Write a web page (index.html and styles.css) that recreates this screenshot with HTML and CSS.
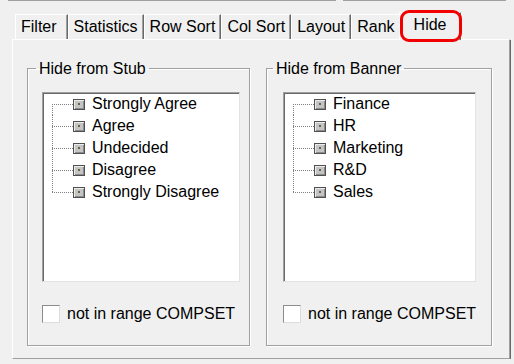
FILE: index.html
```html
<!DOCTYPE html>
<html lang="en">
<head>
    <meta charset="UTF-8">
    <title>Hide</title>
    <link rel="stylesheet" href="styles.css">
</head>
<body>
    <!-- edge of the controls above -->
    <div class="top-strip">
        <span class="strip-left"></span>
        <span class="strip-right"></span>
    </div>

    <div class="dialog">
        <!-- Tabs -->
        <div class="tabs">
            <div class="tab tab-first">Filter</div>
            <div class="tab">Statistics</div>
            <div class="tab">Row Sort</div>
            <div class="tab">Col Sort</div>
            <div class="tab">Layout</div>
            <div class="tab">Rank</div>
            <div class="tab tab-active">Hide<span class="highlight"></span></div>
        </div>

        <!-- Hide page -->
        <div class="tab-panel">
            <fieldset class="group group-stub">
                <legend>Hide from Stub</legend>
                <ul class="tree">
                    <li><span class="branch"></span><span class="node"></span>Strongly Agree</li>
                    <li><span class="branch"></span><span class="node"></span>Agree</li>
                    <li><span class="branch"></span><span class="node"></span>Undecided</li>
                    <li><span class="branch"></span><span class="node"></span>Disagree</li>
                    <li><span class="branch"></span><span class="node"></span>Strongly Disagree</li>
                </ul>
                <label class="check"><span class="box"></span>not in range COMPSET</label>
            </fieldset>

            <fieldset class="group group-banner">
                <legend>Hide from Banner</legend>
                <ul class="tree">
                    <li><span class="branch"></span><span class="node"></span>Finance</li>
                    <li><span class="branch"></span><span class="node"></span>HR</li>
                    <li><span class="branch"></span><span class="node"></span>Marketing</li>
                    <li><span class="branch"></span><span class="node"></span>R&amp;D</li>
                    <li><span class="branch"></span><span class="node"></span>Sales</li>
                </ul>
                <label class="check"><span class="box"></span>not in range COMPSET</label>
            </fieldset>
        </div>
    </div>
</body>
</html>
```

FILE: styles.css
```css
* {
    margin: 0;
    padding: 0;
    box-sizing: border-box;
}

body {
    font-family: "Liberation Sans", Arial, sans-serif;
    font-size: 16px;
    color: #000;
    background-color: #f0f0f0;
}

.top-strip {
    display: flex;
    gap: 7px;
    padding: 0 8px;
}

.top-strip span {
    height: 1px;
    background-color: #a0a0a0;
}

.strip-left {
    width: 328px;
}

.strip-right {
    flex: 1;
}

.dialog {
    margin: 13px 4px 0 12px;
}

/* Tabs */
.tabs {
    display: flex;
    align-items: flex-end;
    height: 25px;
    padding-left: 3px;
}

.tab {
    height: 25px;
    padding: 0 5px;
    line-height: 24px;
    white-space: nowrap;
    border-top: 1px solid #fff;
    border-left: 1px solid #fff;
    border-right: 1px solid #696969;
    box-shadow: inset -1px 0 0 #a0a0a0;
}

.tab-first {
    padding: 0 10px 0 5px;
}

.tab-active {
    position: relative;
    z-index: 1;
    height: 28px;
    margin: 0 -1px -1px -2px;
    padding: 0 14px 3px;
    background-color: #f0f0f0;
}

.highlight {
    position: absolute;
    top: -3px;
    left: 0;
    right: -2px;
    bottom: -2px;
    border: 3px solid #f20000;
    border-radius: 9px;
}

.tab-panel {
    display: flex;
    gap: 16px;
    padding: 18px 0 12px 14px;
    border-top: 1px solid #fff;
    border-left: 1px solid #fff;
    border-right: 1px solid #a0a0a0;
    border-bottom: 1px solid #a0a0a0;
    box-shadow: 1px 1px 0 #696969;
}

/* Group boxes */
.group {
    flex: none;
    width: 223px;
    border: 1px solid #a0a0a0;
    box-shadow: inset 1px 1px 0 #fff, 1px 1px 0 #fff;
    padding: 0 9px 22px 14px;
}

.group-banner {
    width: 224px;
    padding: 0 15px 22px 16px;
}

.group legend {
    padding: 2px 3px 0;
    margin-left: -6px;
    line-height: 18px;
}

.group-banner legend {
    margin-left: -10px;
}

/* Tree view */
.tree {
    list-style: none;
    height: 190px;
    margin-top: 14px;
    background-color: #fff;
    border: 1px solid;
    border-color: #a0a0a0 #e3e3e3 #e3e3e3 #a0a0a0;
    box-shadow: inset 1px 1px 0 #696969;
}

.tree li {
    display: flex;
    align-items: center;
    height: 22px;
    padding-left: 9px;
    white-space: nowrap;
}

.branch {
    flex: none;
    width: 21px;
    height: 22px;
    background:
        repeating-linear-gradient(to right, #808080 0 1px, transparent 1px 2px) 0 11px / 21px 1px no-repeat,
        repeating-linear-gradient(to bottom, #808080 0 1px, transparent 1px 2px) 0 0 / 1px 22px no-repeat;
}

.tree li:first-child .branch {
    background-position: 0 11px, 0 11px;
    background-size: 21px 1px, 1px 11px;
}

.tree li:last-child .branch {
    background-size: 21px 1px, 1px 12px;
}

.node {
    flex: none;
    display: flex;
    align-items: center;
    justify-content: center;
    width: 12px;
    height: 11px;
    margin-right: 7px;
    background-color: #c4c4c4;
    border: 1px solid #505050;
    box-shadow: inset 1px 1px 0 #ececec, inset -1px -1px 0 #8c8c8c;
}

.node::after {
    content: "";
    width: 2px;
    height: 2px;
    background-color: #5d6b45;
}

/* Checkbox */
.check {
    display: flex;
    align-items: center;
    gap: 7px;
    margin-top: 23px;
    height: 18px;
    white-space: nowrap;
}

.box {
    width: 18px;
    height: 18px;
    background-color: #fff;
    border: 1px solid;
    border-color: #8c8c8c #dcdcdc #dcdcdc #8c8c8c;
}
```
